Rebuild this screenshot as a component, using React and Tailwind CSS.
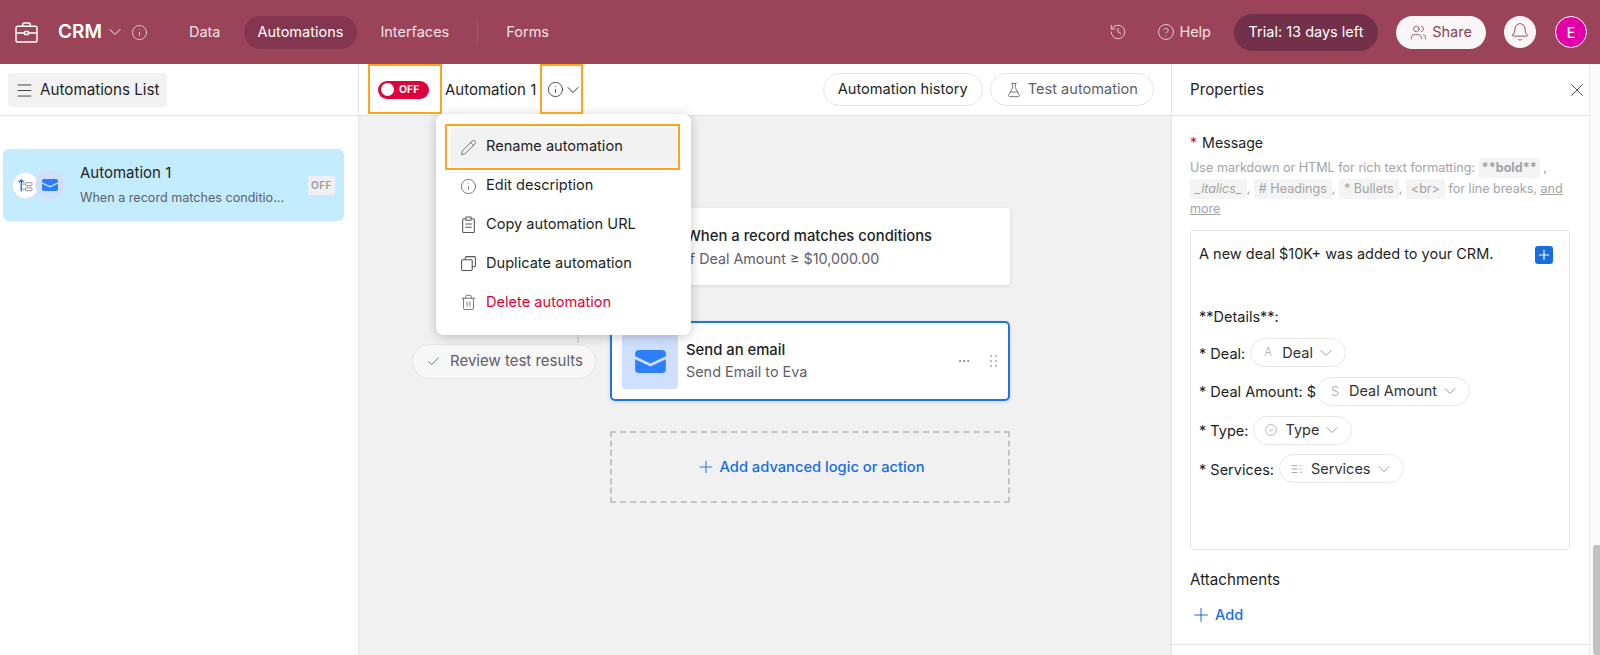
import { useState } from "react"
import {
  Bell,
  Check,
  ChevronDown,
  CircleHelp,
  Ellipsis,
  FlaskConical,
  History,
  Info,
  Menu,
  Pencil,
  Plus,
  Trash2,
  Users,
  X,
} from "lucide-react"

function Envelope({ className }) {
  return (
    <svg viewBox="0 0 32 24" className={className} fill="currentColor">
      <path d="M4 0h24a4 4 0 0 1 4 4v2.4L16 14 0 6.4V4a4 4 0 0 1 4-4z" />
      <path d="M0 9.6 16 17.2l16-7.6V20a4 4 0 0 1-4 4H4a4 4 0 0 1-4-4z" />
    </svg>
  )
}

function Briefcase() {
  return (
    <svg viewBox="0 0 24 22" className="h-[21px] w-[23px]" fill="none" stroke="#fff" strokeWidth="1.5" strokeLinejoin="round">
      <path d="M8 4.5V2.6A1.6 1.6 0 0 1 9.6 1h4.8A1.6 1.6 0 0 1 16 2.6v1.9" />
      <rect x="1" y="4.5" width="22" height="16.5" rx="2" />
      <path d="M1 11.5h9M14 11.5h9" />
      <rect x="10" y="10" width="4" height="3" rx="0.5" />
    </svg>
  )
}

function BranchIcon() {
  return (
    <svg viewBox="0 0 16 16" className="h-[15px] w-[15px]" fill="none">
      <path d="M3.5 14V2.5M1 4.5l2.5-2.5L6 4.5" stroke="#166ee1" strokeWidth="1.5" />
      <path d="M3.5 6.5H8M3.5 12H8" stroke="#999" strokeWidth="1" />
      <rect x="8" y="5" width="7" height="3.2" rx="1" stroke="#888" strokeWidth="1" />
      <rect x="8" y="10.4" width="7" height="3.2" rx="1" stroke="#888" strokeWidth="1" />
    </svg>
  )
}

function ClipboardIcon({ className }) {
  return (
    <svg viewBox="0 0 16 16" className={className} fill="none" stroke="currentColor" strokeWidth="1">
      <rect x="2.5" y="2.5" width="11" height="13" rx="1" />
      <rect x="5.5" y="1" width="5" height="3" rx="0.5" fill="#fff" />
      <path d="M5 7.5h6M5 10.5h6" />
    </svg>
  )
}

function DuplicateIcon({ className }) {
  return (
    <svg viewBox="0 0 16 16" className={className} fill="none" stroke="currentColor" strokeWidth="1">
      <path d="M5 4.5V2.5a1 1 0 0 1 1-1h7.5a1 1 0 0 1 1 1V10a1 1 0 0 1-1 1h-2" />
      <rect x="1.5" y="4.5" width="10" height="10" rx="1" />
    </svg>
  )
}

function SelectIcon() {
  return (
    <svg viewBox="0 0 12 12" className="h-[12px] w-[12px]" fill="none" stroke="currentColor" strokeWidth="0.8">
      <circle cx="6" cy="6" r="5.4" />
      <path d="M3.8 5 6 7.2 8.2 5" />
    </svg>
  )
}

function ServicesIcon() {
  return (
    <svg viewBox="0 0 12 12" className="h-[12px] w-[12px]" fill="none" stroke="currentColor" strokeWidth="1">
      <path d="M0.5 2.5h6M0.5 6h6M0.5 9.5h6" />
      <path d="M9 2.5h2.5M9 6h2.5M9 9.5h2.5" strokeDasharray="1 1" />
    </svg>
  )
}

function NavLink({ children, active }) {
  return (
    <div className={`flex h-[33px] items-center rounded-full px-[14px] text-[14.5px] ${active ? "bg-[#843650] text-white" : "text-[#f2e2e6]"}`}>
      {children}
    </div>
  )
}

function Chip({ children, tight }) {
  return <span className={`inline-block rounded-[2px] bg-[#f4f4f4] leading-[20px] ${tight ? "px-[3px]" : "px-[5px]"}`}>{children}</span>
}

function FieldPill({ icon, label, className }) {
  return (
    <span className={`mb-[2px] inline-flex h-[29px] items-center rounded-full border border-[#e8e8e8] bg-white pl-[11px] pr-[9px] text-[#333] ${className}`}>
      <span className="mr-[8px] flex w-[12px] justify-center text-[#aaa]">{icon}</span>
      {label}
      <ChevronDown className="ml-[3px] h-[20px] w-[20px] text-[#888]" strokeWidth={1} />
    </span>
  )
}

function FieldRow({ label, children }) {
  return (
    <div className="flex h-[38.8px] items-center">
      <span>{label}</span>
      {children}
    </div>
  )
}

const menuItems = [
  { label: "Rename automation", Icon: Pencil, active: true },
  { label: "Edit description", Icon: Info },
  { label: "Copy automation URL", Icon: ClipboardIcon },
  { label: "Duplicate automation", Icon: DuplicateIcon },
  { label: "Delete automation", Icon: Trash2, danger: true },
]

function AutomationMenu() {
  return (
    <div className="absolute left-[77px] top-[50px] z-20 w-[255px] rounded-[8px] bg-white px-[14px] pb-[13px] pt-[14px] shadow-[0_2px_12px_rgba(0,0,0,0.22)]">
      {menuItems.map(({ label, Icon, active, danger }) => (
        <div
          key={label}
          className={`flex h-[38.8px] items-center gap-[9px] rounded-[3px] pl-[10px] text-[14.6px] ${active ? "bg-[#f2f2f2]" : ""} ${danger ? "text-[#dc043b]" : "text-[#1d1f25]"}`}
        >
          <Icon className="h-[17px] w-[17px] text-[#555]" strokeWidth={1.1} />
          {label}
        </div>
      ))}
    </div>
  )
}

function Highlight({ className }) {
  return <div className={`pointer-events-none absolute z-30 border-2 border-[#fda51c] ${className}`} />
}

export default function App() {
  const [enabled] = useState(false)

  return (
    <div className="flex h-[655px] w-[1600px] flex-col overflow-hidden bg-white font-['Inter',sans-serif] text-[#1d1f25]">
      {/* top bar */}
      <header className="flex h-[64px] shrink-0 items-center bg-[#9b4359] pl-[15px] pr-[13px] text-white">
        <Briefcase />
        <span className="ml-[20px] text-[19px] font-semibold">CRM</span>
        <ChevronDown className="ml-[3px] h-[20px] w-[20px]" strokeWidth={1.1} />
        <Info className="ml-[6px] h-[17px] w-[17px] text-[#f2e2e6]" strokeWidth={1.1} />
        <nav className="ml-[27px] flex items-center">
          <NavLink>Data</NavLink>
          <div className="w-[9px]" />
          <NavLink active>Automations</NavLink>
          <div className="w-[9px]" />
          <NavLink>Interfaces</NavLink>
          <div className="mx-[14px] h-[22px] w-px bg-[#a85970]" />
          <NavLink>Forms</NavLink>
        </nav>
        <div className="ml-auto flex items-center">
          <History className="h-[18px] w-[18px] text-[#f2e2e6]" strokeWidth={1.1} />
          <CircleHelp className="ml-[30px] h-[18px] w-[18px] text-[#f2e2e6]" strokeWidth={1.1} />
          <span className="ml-[4px] text-[14.5px] text-[#f2e2e6]">Help</span>
          <div className="ml-[23px] flex h-[37px] w-[144px] items-center justify-center rounded-full bg-[#73304a] text-[14.5px]">
            Trial: 13 days left
          </div>
          <div className="ml-[18px] flex h-[33px] w-[90px] items-center justify-center gap-[5px] rounded-full bg-[#faf5f6] text-[14.5px] text-[#8d3f55]">
            <Users className="h-[17px] w-[17px]" strokeWidth={1.1} />
            Share
          </div>
          <div className="ml-[18px] flex h-[32px] w-[32px] items-center justify-center rounded-full bg-[#faf5f6] text-[#8d3f55]">
            <Bell className="h-[20px] w-[20px]" strokeWidth={1.1} />
          </div>
          <div className="ml-[19px] flex h-[32px] w-[32px] items-center justify-center rounded-full border border-white bg-[#e100a5] text-[14px] font-medium">
            E
          </div>
        </div>
      </header>

      <div className="flex min-h-0 flex-1">
        {/* automations list */}
        <aside className="flex w-[359px] shrink-0 flex-col border-r border-[#e3e3e3] bg-white">
          <div className="flex h-[52px] shrink-0 items-center border-b border-[#e3e3e3] pl-[8px]">
            <div className="flex h-[34px] w-[159px] items-center gap-[6px] rounded-[3px] bg-[#f2f2f2] pl-[7px] pt-px text-[15.2px]">
              <Menu className="h-[19px] w-[19px] text-[#444]" strokeWidth={1.25} />
              Automations List
            </div>
          </div>
          <div className="ml-[3px] mt-[33px] flex h-[72px] w-[341px] items-center rounded-[6px] bg-[#c4ecff] pl-[9px] pr-[9px]">
            <div className="flex shrink-0 items-center">
              <div className="flex h-[27px] w-[27px] items-center justify-center rounded-full border border-[#e5e5e5] bg-white">
                <BranchIcon />
              </div>
              <div className="-ml-[4px] flex h-[30px] w-[30px] items-center justify-center rounded-full border border-[#d9e3f5] bg-[#cfdfff] text-[#2d7ff9]">
                <Envelope className="h-[12px] w-[16px]" />
              </div>
            </div>
            <div className="ml-[15px] mt-[-2px] min-w-0 flex-1">
              <div className="text-[15px] leading-[20px]">Automation 1</div>
              <div className="mt-[7px] text-[12.6px] leading-[16px] text-[#5e6068]">When a record matches conditio...</div>
            </div>
            <div className="rounded-[2px] bg-[#eef0f3] px-[3px] py-[2px] text-[10px] font-semibold tracking-[0.5px] text-[#9a9a9a]">OFF</div>
          </div>
        </aside>

        {/* builder */}
        <main className="relative flex min-w-0 flex-1 flex-col bg-[#f1f1f1]">
          <div className="flex h-[52px] shrink-0 items-center border-b border-[#e3e3e3] bg-white pl-[19px] pr-[17px]">
            <div className="flex h-[18px] w-[51px] items-center rounded-full bg-[#dc043b] pl-[3px]">
              <div className="h-[13px] w-[13px] rounded-full bg-white" />
              <span className="ml-[5px] text-[10.5px] font-bold text-white">{enabled ? "ON" : "OFF"}</span>
            </div>
            <span className="ml-[16px] pt-px text-[15px]">Automation 1</span>
            <Info className="ml-[11px] h-[17px] w-[17px]" strokeWidth={1.1} />
            <ChevronDown className="-ml-[1px] h-[20px] w-[20px]" strokeWidth={1.1} />
            <div className="ml-auto flex h-[33px] items-center rounded-full border border-[#e6e6e6] bg-white px-[14px] pt-px text-[14.6px]">
              Automation history
            </div>
            <div className="ml-[7px] flex h-[33px] items-center gap-[6px] rounded-full border border-[#e6e6e6] bg-white px-[15px] pt-px text-[14.6px] text-[#5e6068]">
              <FlaskConical className="h-[16px] w-[16px]" strokeWidth={1.25} />
              Test automation
            </div>
          </div>

          <div className="flex flex-col pl-[53px] pt-[92px]">
            <div className="ml-[198px] flex h-[77px] w-[400px] items-center rounded-[3px] bg-white pl-[76px] pt-[2px] shadow-[0_1px_4px_rgba(0,0,0,0.12)]">
              <div>
                <div className="text-[14.8px] font-medium leading-[20px]">When a record matches conditions</div>
                <div className="mt-[3px] text-[14.3px] leading-[20px] text-[#5e6068]">If Deal Amount ≥ $10,000.00</div>
              </div>
            </div>

            <div className="relative mt-[36px] flex items-center gap-[14px]">
              <div className="absolute left-[165px] top-[8px] h-[14px] w-[2px] bg-[#d8d8d8]" />
              <div className="relative flex h-[35px] w-[184px] items-center gap-[9px] rounded-full border border-[#e4e4e4] bg-[#f7f7f7] pl-[13px] text-[15px] text-[#5e6068]">
                <Check className="h-[15px] w-[15px] text-[#048a0e]" strokeWidth={1.25} />
                Review test results
              </div>
              <div className="flex h-[80px] w-[400px] items-center rounded-[5px] border-2 border-[#1f74e8] bg-white pl-[10px] pr-[11px] shadow-[0_1px_4px_rgba(0,0,0,0.12)]">
                <div className="flex h-[56px] w-[56px] shrink-0 items-center justify-center rounded-[4px] bg-[#cfdfff] text-[#2d7ff9]">
                  <Envelope className="h-[23px] w-[31px]" />
                </div>
                <div className="ml-[8px] flex-1">
                  <div className="text-[14.8px] font-medium leading-[20px]">Send an email</div>
                  <div className="mt-[2px] text-[14.4px] leading-[20px] text-[#5e6068]">Send Email to Eva</div>
                </div>
                <Ellipsis className="h-[14px] w-[14px] text-[#777]" strokeWidth={1.5} />
                <div className="ml-[19px] grid grid-cols-2 gap-x-[3px] gap-y-[3px]">
                  {[0, 1, 2, 3, 4, 5].map((n) => (
                    <span key={n} className="h-[2px] w-[2px] rounded-full bg-[#aaa]" />
                  ))}
                </div>
              </div>
            </div>

            <div className="ml-[198px] mt-[30px] flex h-[72px] w-[400px] items-center justify-center gap-[4px] rounded-[2px] border-2 border-dashed border-[#c4c4c4] text-[14.7px] font-medium text-[#166ee1]">
              <Plus className="h-[20px] w-[20px]" strokeWidth={1.1} />
              Add advanced logic or action
            </div>
          </div>

          <AutomationMenu />
          <Highlight className="left-[9px] top-0 h-[50px] w-[74px]" />
          <Highlight className="left-[181px] top-0 h-[50px] w-[43px]" />
          <Highlight className="left-[86px] top-[60px] h-[46px] w-[235px]" />
        </main>

        {/* properties */}
        <aside className="flex w-[429px] shrink-0 border-l border-[#e3e3e3] bg-white">
          <div className="flex min-w-0 flex-1 flex-col">
            <div className="flex h-[52px] shrink-0 items-center justify-between border-b border-[#e3e3e3] pl-[18px] pr-[1px] text-[15.2px]">
              <span className="pt-px">Properties</span>
              <X className="h-[22px] w-[22px] text-[#444]" strokeWidth={1} />
            </div>
            <div className="flex-1 px-[18px] pt-[17px] text-[14.5px]">
              <div className="flex h-[20px] items-center text-[14.2px] leading-[20px]">
                <span className="mr-[5px] text-[#dc043b]">*</span>
                Message
              </div>
              <p className="mt-[5px] text-[12.6px] leading-[20.7px] text-[#a3a3a3]">
                Use markdown or HTML for rich text formatting: <Chip tight><b>**bold**</b></Chip> , <Chip><i>_italics_</i></Chip>, <Chip># Headings</Chip>, <Chip>* Bullets</Chip>, <Chip>&lt;br&gt;</Chip> for line breaks, <u>and</u> <u>more</u>
              </p>
              <div className="relative mt-[10px] h-[320px] w-[380px] rounded-[3px] border border-[#e6e6e6] px-[8px] pt-[13px]">
                <div className="leading-[20px]">A new deal $10K+ was added to your CRM.</div>
                <div className="absolute right-[16px] top-[15px] flex h-[18px] w-[18px] items-center justify-center rounded-[3px] bg-[#166ee1]">
                  <Plus className="h-[16px] w-[16px] text-white" strokeWidth={1.75} />
                </div>
                <div className="mt-[35px] flex h-[35px] items-center">**Details**:</div>
                <FieldRow label="* Deal:">
                  <FieldPill className="ml-[5px]" icon={<span className="text-[11px] font-light">A</span>} label="Deal" />
                </FieldRow>
                <FieldRow label="* Deal Amount: $">
                  <FieldPill className="ml-[1px]" icon={<span className="text-[13px] font-light">S</span>} label="Deal Amount" />
                </FieldRow>
                <FieldRow label="* Type:">
                  <FieldPill className="ml-[5px]" icon={<SelectIcon />} label="Type" />
                </FieldRow>
                <FieldRow label="* Services:">
                  <FieldPill className="ml-[5px]" icon={<ServicesIcon />} label="Services" />
                </FieldRow>
              </div>
              <div className="mt-[20px] text-[15.2px] leading-[20px]">Attachments</div>
              <div className="mt-[14px] flex items-center gap-[3px] font-medium text-[#166ee1]">
                <Plus className="h-[22px] w-[22px]" strokeWidth={1.1} />
                Add
              </div>
            </div>
            <div className="h-[11px] shrink-0 border-t border-[#e3e3e3]" />
          </div>
          {/* scrollbar */}
          <div className="flex w-[11px] shrink-0 flex-col justify-end border-l border-[#ececec] bg-[#fafafa] pl-[3px]">
            <div className="h-[110px] rounded-l-[3px] bg-[#c1c1c1]" />
          </div>
        </aside>
      </div>
    </div>
  )
}
